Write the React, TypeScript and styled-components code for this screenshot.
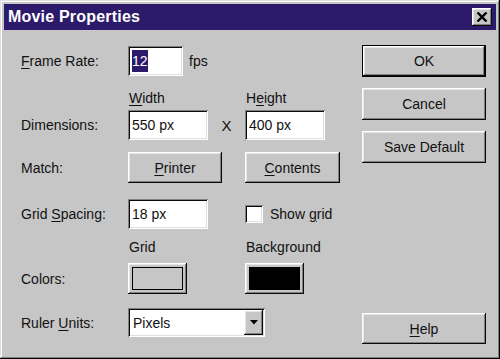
import React from "react";
import styled, { createGlobalStyle, css } from "styled-components";

const GlobalStyle = createGlobalStyle`
  html, body { margin: 0; padding: 0; background: #c6c6c6; }
  body { font-family: "Liberation Sans", Arial, sans-serif; }
`;

const raised = css`
  box-shadow: inset -1px -1px #0a0a0a, inset 1px 1px #ffffff,
    inset -2px -2px #808080, inset 2px 2px #e6e6e6;
`;

const sunken = css`
  box-shadow: inset 1px 1px #808080, inset -1px -1px #ffffff,
    inset 2px 2px #0a0a0a, inset -2px -2px #e0e0e0;
`;

const Window = styled.div`
  width: 500px;
  height: 359px;
  box-sizing: border-box;
  background: #c6c6c6;
  padding: 4px;
  display: flex;
  flex-direction: column;
  box-shadow: inset -1px -1px #000000, inset 1px 1px #e0e0e0,
    inset -2px -2px #808080, inset 2px 2px #ffffff;
  color: #111;
  font-family: "Liberation Sans", Arial, sans-serif;
  font-size: 14px;
`;

const TitleBar = styled.div`
  height: 26px;
  background: #2c1b6b;
  display: flex;
  align-items: center;
  justify-content: space-between;
  padding: 0 4px;
`;

const TitleText = styled.span`
  color: #ffffff;
  font-weight: bold;
  font-size: 16px;
  letter-spacing: 0.2px;
`;

const CloseButton = styled.div`
  width: 20px;
  height: 18px;
  background: #c6c6c6;
  ${raised};
  display: flex;
  align-items: center;
  justify-content: center;
`;

const Body = styled.div`
  flex: 1;
  display: flex;
  padding: 0 10px 11px 17px;
`;

const Form = styled.div`
  width: 341px;
  display: flex;
  flex-direction: column;
`;

const Row = styled.div<{ $top: number; $h: number }>`
  display: grid;
  grid-template-columns: 107px 117px 1fr;
  align-items: center;
  margin-top: ${(p) => p.$top}px;
  height: ${(p) => p.$h}px;
`;

const Label = styled.span`
  white-space: nowrap;
`;

const ColHead = styled.span<{ $col: number }>`
  grid-column: ${(p) => p.$col};
  padding-left: 1px;
`;

const Key = styled.span`
  text-decoration: underline;
  text-underline-offset: 2px;
`;

const Cell = styled.div<{ $col?: number; $span?: number }>`
  grid-column: ${(p) => p.$col ?? 2} / span ${(p) => p.$span ?? 1};
  display: flex;
  align-items: center;
  height: 100%;
`;

const TextField = styled.div<{ $w: number }>`
  width: ${(p) => p.$w}px;
  height: 30px;
  box-sizing: border-box;
  background: #ffffff;
  ${sunken};
  display: flex;
  align-items: center;
  padding-left: 4px;
  white-space: nowrap;
`;

const Selected = styled.span`
  background: #2c1b6b;
  color: #ffffff;
  padding: 2px 0;
  line-height: 18px;
`;

const Unit = styled.span`
  margin-left: 6px;
`;

const Times = styled.span`
  flex: 1;
  text-align: center;
  font-size: 15px;
`;

const PushButton = styled.div<{ $w?: number; $h?: number; $default?: boolean }>`
  width: ${(p) => (p.$w ? `${p.$w}px` : "100%")};
  height: ${(p) => p.$h ?? 31}px;
  box-sizing: border-box;
  background: #c6c6c6;
  display: flex;
  align-items: center;
  justify-content: center;
  white-space: nowrap;
  ${(p) =>
    p.$default
      ? css`
          box-shadow: inset 0 0 0 1px #000000, inset -2px -2px #0a0a0a,
            inset 2px 2px #ffffff, inset -3px -3px #808080,
            inset 3px 3px #e6e6e6;
        `
      : raised};
`;

const CheckBox = styled.div`
  width: 18px;
  height: 18px;
  box-sizing: border-box;
  background: #ffffff;
  ${sunken};
  flex-shrink: 0;
`;

const CheckLabel = styled.span`
  margin-left: 7px;
`;

const Swatch = styled.div`
  width: 59px;
  height: 31px;
  box-sizing: border-box;
  background: #c6c6c6;
  ${raised};
  padding: 4px;
  display: flex;
`;

const SwatchFill = styled.div<{ $color: string }>`
  flex: 1;
  background: ${(p) => p.$color};
  border: 1px solid #000000;
`;

const Select = styled.div`
  width: 137px;
  height: 29px;
  box-sizing: border-box;
  background: #ffffff;
  ${sunken};
  display: flex;
  align-items: center;
  padding: 2px 2px 2px 5px;
`;

const SelectValue = styled.span`
  flex: 1;
`;

const ArrowButton = styled.div`
  width: 19px;
  height: 100%;
  box-sizing: border-box;
  background: #c6c6c6;
  ${raised};
  display: flex;
  align-items: center;
  justify-content: center;
`;

const Side = styled.div`
  width: 124px;
  display: flex;
  flex-direction: column;
  gap: 11px;
  padding-top: 15px;
`;

const BottomSlot = styled.div`
  margin-top: auto;
`;

export default function App() {
  return (
    <>
      <GlobalStyle />
      <Window>
        <TitleBar>
          <TitleText>Movie Properties</TitleText>
          <CloseButton>
            <svg width="12" height="10" viewBox="0 0 12 10">
              <path d="M1.5 0.5 L10.5 9.5 M10.5 0.5 L1.5 9.5" stroke="#000" strokeWidth="2.4" />
            </svg>
          </CloseButton>
        </TitleBar>
        <Body>
          <Form>
            <Row $top={16} $h={30}>
              <Label>
                <Key>F</Key>rame Rate:
              </Label>
              <Cell>
                <TextField $w={55}>
                  <Selected>12</Selected>
                </TextField>
                <Unit>fps</Unit>
              </Cell>
            </Row>
            <Row $top={12} $h={20}>
              <ColHead $col={2}>
                <Key>W</Key>idth
              </ColHead>
              <ColHead $col={3}>
                H<Key>e</Key>ight
              </ColHead>
            </Row>
            <Row $top={2} $h={30}>
              <Label>Dimensions:</Label>
              <Cell>
                <TextField $w={80}>550 px</TextField>
                <Times>X</Times>
              </Cell>
              <Cell $col={3}>
                <TextField $w={80}>400 px</TextField>
              </Cell>
            </Row>
            <Row $top={12} $h={31}>
              <Label>Match:</Label>
              <Cell>
                <PushButton $w={94}>
                  <span>
                    <Key>P</Key>rinter
                  </span>
                </PushButton>
              </Cell>
              <Cell $col={3}>
                <PushButton $w={95}>
                  <span>
                    <Key>C</Key>ontents
                  </span>
                </PushButton>
              </Cell>
            </Row>
            <Row $top={16} $h={30}>
              <Label>
                Grid <Key>S</Key>pacing:
              </Label>
              <Cell>
                <TextField $w={80}>18 px</TextField>
              </Cell>
              <Cell $col={3}>
                <CheckBox />
                <CheckLabel>
                  Show <Key>g</Key>rid
                </CheckLabel>
              </Cell>
            </Row>
            <Row $top={8} $h={20}>
              <ColHead $col={2}>Grid</ColHead>
              <ColHead $col={3}>Background</ColHead>
            </Row>
            <Row $top={6} $h={31}>
              <Label>Colors:</Label>
              <Cell>
                <Swatch>
                  <SwatchFill $color="#c6c6c6" />
                </Swatch>
              </Cell>
              <Cell $col={3}>
                <Swatch>
                  <SwatchFill $color="#000000" />
                </Swatch>
              </Cell>
            </Row>
            <Row $top={14} $h={29}>
              <Label>
                Ruler <Key>U</Key>nits:
              </Label>
              <Cell $span={2}>
                <Select>
                  <SelectValue>Pixels</SelectValue>
                  <ArrowButton>
                    <svg width="8" height="5" viewBox="0 0 8 5">
                      <path d="M0 0 H8 L4 4.5 Z" fill="#000" />
                    </svg>
                  </ArrowButton>
                </Select>
              </Cell>
            </Row>
          </Form>
          <Side>
            <PushButton $h={32} $default>
              OK
            </PushButton>
            <PushButton $h={32}>Cancel</PushButton>
            <PushButton $h={32}>Save Default</PushButton>
            <BottomSlot>
              <PushButton $h={31}>
                <span>
                  <Key>H</Key>elp
                </span>
              </PushButton>
            </BottomSlot>
          </Side>
        </Body>
      </Window>
    </>
  );
}
